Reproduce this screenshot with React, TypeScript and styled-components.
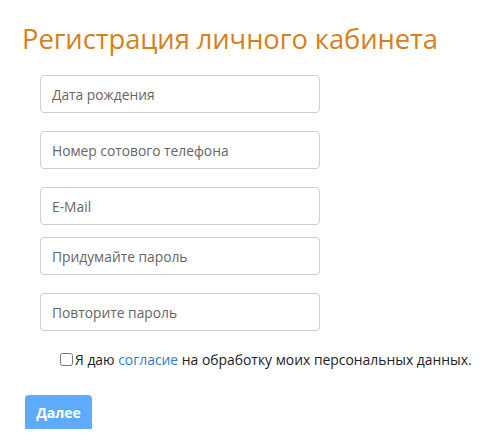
import styled, { createGlobalStyle } from "styled-components";

const GlobalStyle = createGlobalStyle`
  html, body {
    margin: 0;
    background: #ffffff;
  }
  body {
    font-family: "Open Sans", "Liberation Sans", sans-serif;
  }
`;

const Page = styled.div`
  padding: 20px 0 0 22px;
`;

const Title = styled.h1`
  margin: 0;
  font-size: 27.4px;
  font-weight: 400;
  line-height: 38px;
  color: #d7801a;
  letter-spacing: -0.1px;
`;

const Fields = styled.div`
  display: flex;
  flex-direction: column;
  margin: 17px 0 0 18px;
`;

const Input = styled.input<{ $gap: number }>`
  box-sizing: border-box;
  width: 280px;
  height: 38px;
  margin-top: ${(p) => p.$gap}px;
  padding: 0 11px;
  border: 1px solid #cfcfcf;
  border-radius: 4px;
  font-family: inherit;
  font-size: 13.8px;
  color: #333;
  outline: none;

  &::placeholder {
    color: #666;
  }
`;

const Consent = styled.label`
  display: flex;
  align-items: center;
  gap: 2px;
  margin: 19px 0 0 38px;
  font-size: 13.9px;
  color: #222;
  white-space: nowrap;
`;

const Check = styled.input`
  width: 13px;
  height: 13px;
  margin: 0;
`;

const Link = styled.a`
  color: #2f7dc7;
  text-decoration: none;
`;

const Submit = styled.button`
  margin: 26px 0 0 3px;
  width: 67px;
  height: 34px;
  border: none;
  border-radius: 4px 4px 0 0;
  background: #5eabfb;
  color: #ffffff;
  font-family: inherit;
  font-size: 14px;
  font-weight: 700;
`;

const fields: [string, string, number][] = [
  ["Дата рождения", "text", 0],
  ["Номер сотового телефона", "tel", 18],
  ["E-Mail", "email", 18],
  ["Придумайте пароль", "password", 12],
  ["Повторите пароль", "password", 18],
];

export default function App() {
  return (
    <>
      <GlobalStyle />
      <Page>
        <Title>Регистрация личного кабинета</Title>
        <Fields>
          {fields.map(([ph, type, gap]) => (
            <Input key={ph} type={type} placeholder={ph} $gap={gap} />
          ))}
        </Fields>
        <Consent>
          <Check type="checkbox" />
          <span>
            Я даю <Link href="#">согласие</Link> на обработку моих персональных данных.
          </span>
        </Consent>
        <Submit>Далее</Submit>
      </Page>
    </>
  );
}
